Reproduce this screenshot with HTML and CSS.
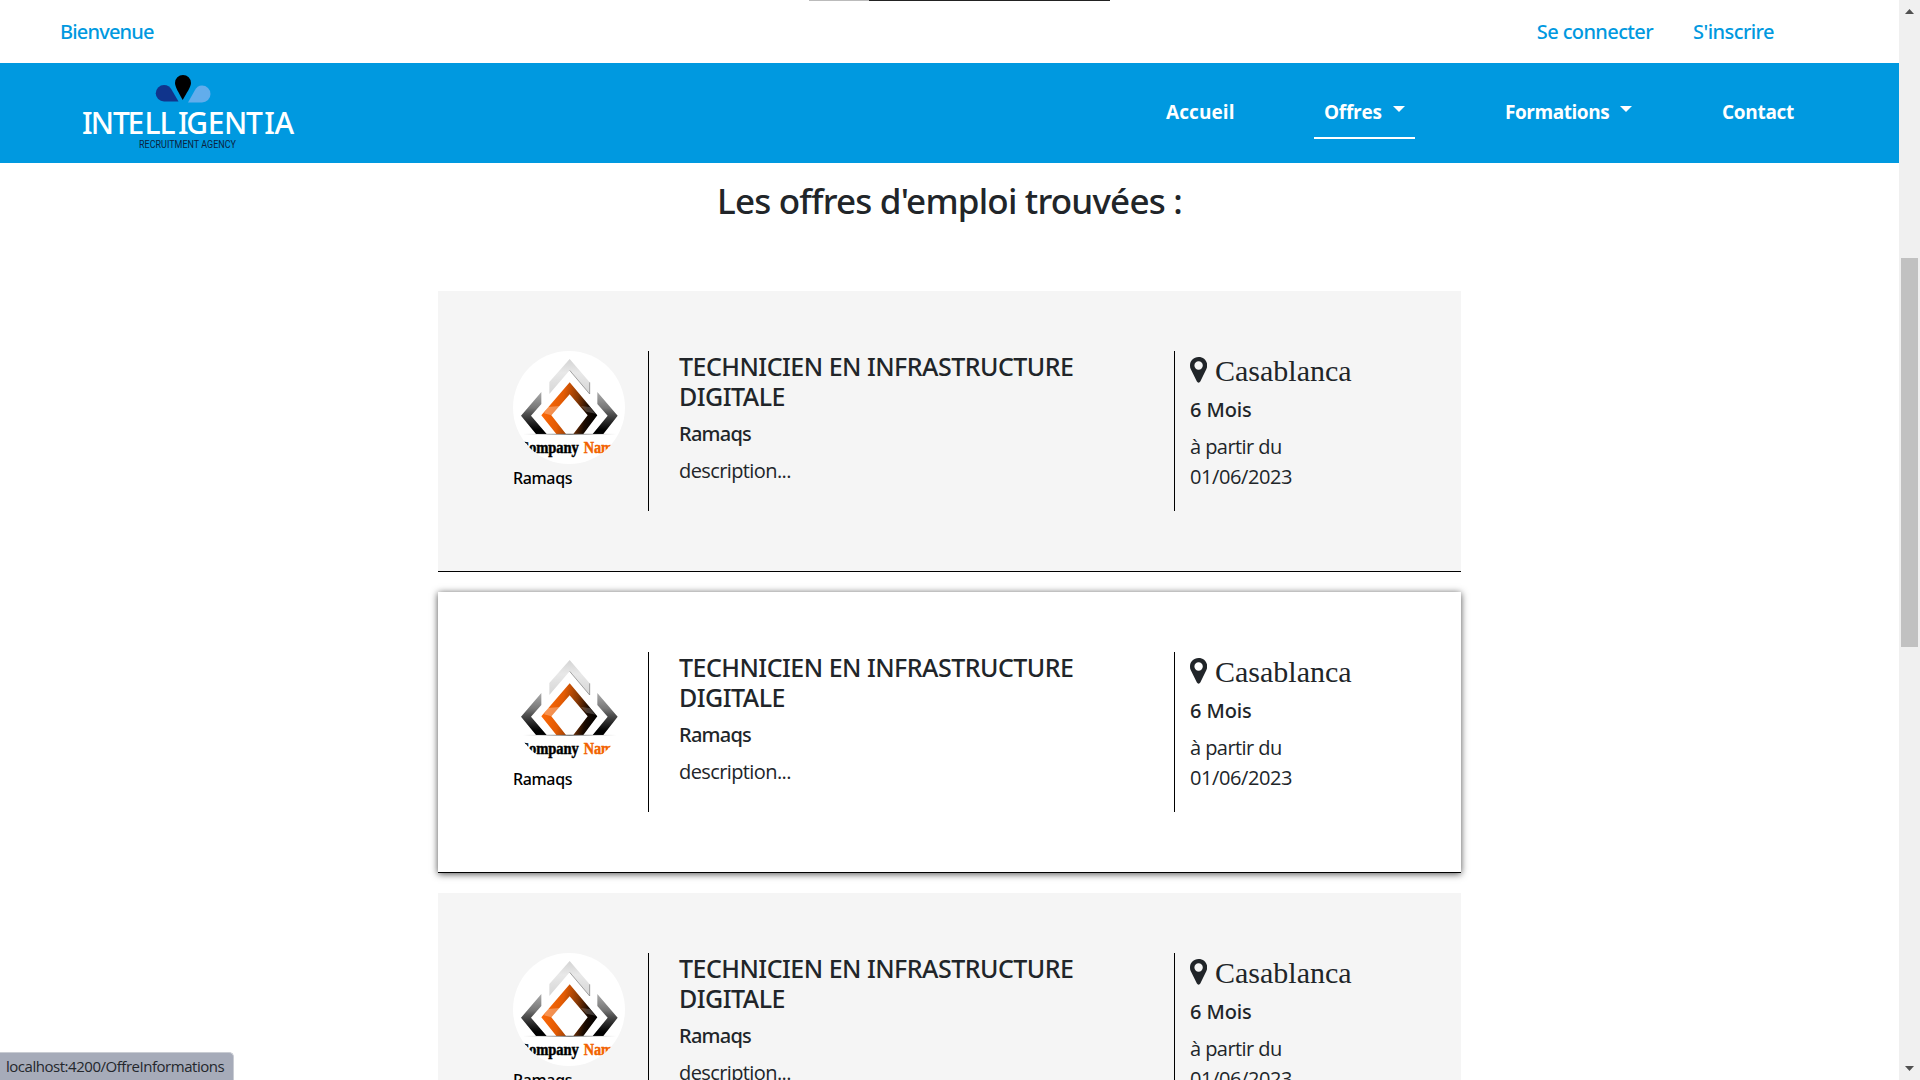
FILE: index.html
```html
<!DOCTYPE html>
<html lang="fr">
<head>
<meta charset="utf-8">
<title>Intelligentia</title>
<link rel="stylesheet" href="styles.css">
</head>
<body>
<svg class="defs" aria-hidden="true">
  <defs>
    <linearGradient id="g-side" x1="0" y1="0" x2="0" y2="1">
      <stop offset="0" stop-color="#aaa"/><stop offset=".38" stop-color="#777"/><stop offset=".5" stop-color="#555"/><stop offset=".9" stop-color="#000"/>
    </linearGradient>
    <linearGradient id="g-mid" x1="0" y1=".4" x2="1" y2=".6">
      <stop offset="0" stop-color="#ff6a08"/><stop offset=".35" stop-color="#e35b04"/><stop offset=".6" stop-color="#8a3a05"/><stop offset=".82" stop-color="#1a0a00"/><stop offset="1" stop-color="#000"/>
    </linearGradient>
    <linearGradient id="g-top" x1="0" y1="0" x2="0" y2="1">
      <stop offset="0" stop-color="#d4d4d4"/><stop offset=".4" stop-color="#e8e8e8"/><stop offset="1" stop-color="#d6d6d6"/>
    </linearGradient>
    <linearGradient id="g-floor"><stop offset="0" stop-color="#999" stop-opacity="0"/><stop offset=".5" stop-color="#555"/><stop offset="1" stop-color="#999" stop-opacity="0"/></linearGradient>
    <clipPath id="round"><ellipse cx="168" cy="169.5" rx="168" ry="169.5"/></clipPath>
    <symbol id="company" viewBox="0 0 336 339">
      <g clip-path="url(#round)">
        <path fill="#fff" d="M0 0h336v339H0z"/>
        <path fill="url(#g-top)" d="M170 24l60 70v35l-60-71-61 71V93z"/>
        <path fill="none" stroke="#777" stroke-width="2" d="M230 94v35l-60-71"/>
        <path fill="url(#g-side)" d="M85 123v36l-31 35 47 55H69L24 194z"/>
        <path fill="url(#g-side)" d="M253 123v36l31 35-45 55h32l43-55z"/>
        <path fill="url(#g-mid)" fill-rule="evenodd" d="M170 94l83 99-42 56h-30l43-56-54-63-55 63 44 56h-29l-45-56z"/>
        <path fill="#fff" opacity=".3" d="M104 168l36-3-25 28-22-6z"/>
        <path fill="#fff" opacity=".2" d="M204 165l26 3 18 20-28-6z"/>
        <path fill="url(#g-floor)" d="M30 248h280v3H30z"/>
        <text class="company-text" x="17" y="307" textLength="180" lengthAdjust="spacingAndGlyphs">Company</text>
        <text class="company-text company-orange" x="212" y="307" textLength="106" lengthAdjust="spacingAndGlyphs">Name</text>
      </g>
    </symbol>
    <symbol id="marker" viewBox="0 0 17 26">
      <path fill-rule="evenodd" d="M8.6 0C3.6 0 0 3.6 0 8.5c0 1.4.2 2.500.7 3.500l6.200 12.600c.7 1.500 2.700 1.500 3.400 0L16.400 12c.5-1 .8-2.100.8-3.500C17.200 3.600 13.500 0 8.600 0zM8.600 4.300a4.200 4.200 0 1 1 0 8.400 4.200 4.200 0 0 1 0-8.400z"/>
    </symbol>
  </defs>
</svg>
<div class="window">
  <div class="page">
    <header class="topbar">
      <span class="welcome">Bienvenue</span>
      <a class="login">Se connecter</a>
      <a class="signup">S'inscrire</a>
    </header>
    <nav class="navbar">
      <svg class="brand" viewBox="0 0 240 80" width="240" height="80">
        <path fill="#000" d="M113 2a8 8 0 0 1 8 8c0 4-4.500 10-8.300 17C109 20 105 14 105 10a8 8 0 0 1 8-8z"/>
        <path fill="#10348c" d="M94 12c3.500 0 6 2 7.500 4.500L108.500 28.500H94a8.200 8.200 0 1 1 0-16.500z"/>
        <path fill="#62adec" d="M132 12.500c-3.500 0-5.500 2-7 4.500L118 29.500h14a8.500 8.500 0 1 0 0-17z"/>
        <text class="brand-name" y="60.700" x="11.900 20.800 43 57.400 74.400 89.400 107.900 116.200 137.800 154.100 176 194.200 204.600">INTELLIGENTIA</text>
        <text class="brand-sub" x="69" y="75" textLength="97" lengthAdjust="spacingAndGlyphs">RECRUITMENT AGENCY</text>
      </svg>
      <div class="menu">
        <a class="item accueil">Accueil</a>
        <a class="item offres active">Offres<i class="caret"></i></a>
        <a class="item formations"><span>Formations</span><i class="caret"></i></a>
        <a class="item contact">Contact</a>
      </div>
    </nav>
    <main>
      <h3 class="heading">Les offres d'emploi trouvées :</h3>
      <article class="card">
        <div class="company"><svg class="logo"><use href="#company"/></svg><span>Ramaqs</span></div>
        <div class="info"><h5>TECHNICIEN EN INFRASTRUCTURE DIGITALE</h5><h6>Ramaqs</h6><p>description...</p></div>
        <div class="place"><div class="city"><svg class="pin"><use href="#marker"/></svg>Casablanca</div><h6>6 Mois</h6><p>à partir du<br><span class="date">01/06/2023</span></p></div>
      </article>
      <article class="card hovered">
        <div class="company"><svg class="logo"><use href="#company"/></svg><span>Ramaqs</span></div>
        <div class="info"><h5>TECHNICIEN EN INFRASTRUCTURE DIGITALE</h5><h6>Ramaqs</h6><p>description...</p></div>
        <div class="place"><div class="city"><svg class="pin"><use href="#marker"/></svg>Casablanca</div><h6>6 Mois</h6><p>à partir du<br><span class="date">01/06/2023</span></p></div>
      </article>
      <article class="card">
        <div class="company"><svg class="logo"><use href="#company"/></svg><span>Ramaqs</span></div>
        <div class="info"><h5>TECHNICIEN EN INFRASTRUCTURE DIGITALE</h5><h6>Ramaqs</h6><p>description...</p></div>
        <div class="place"><div class="city"><svg class="pin"><use href="#marker"/></svg>Casablanca</div><h6>6 Mois</h6><p>à partir du<br><span class="date">01/06/2023</span></p></div>
      </article>
    </main>
  </div>
  <div class="scrollbar">
    <svg width="9" height="5" viewBox="0 0 9 5"><path fill="#505050" d="M4.500 0L9 5H0z"/></svg>
    <div class="thumb"></div>
    <svg width="9" height="5" viewBox="0 0 9 5"><path fill="#505050" d="M0 0h9L4.500 5z"/></svg>
  </div>
</div>
<div class="edge"></div>
<div class="status">localhost:4200/OffreInformations</div>
</body>
</html>
```
FILE: styles.css
```css
* { box-sizing: border-box; }
body {
  margin: 0;
  overflow: hidden;
  background: #fff;
  color: #212529;
  font: 400 20px/30px "Open Sans", "Noto Sans", sans-serif;
}
h3, h5, h6, p { margin: 0; }
h3, h5, h6 { font-family: "Noto Sans", sans-serif; font-weight: 500; }
.defs { display: block; width: 0; height: 0; }
.window { display: flex; height: 1080px; }
.page { width: 1899px; height: 1080px; overflow: hidden; }

.topbar {
  display: flex;
  align-items: center;
  height: 63px;
  padding: 1px 125px 0 60px;
  color: #0099e0;
  font-family: "Noto Sans", sans-serif;
  font-weight: 500;
}
.welcome { margin-right: auto; letter-spacing: -.82px; }
.login { letter-spacing: -.62px; margin-right: 40px; }
.signup { letter-spacing: -.57px; }

.navbar {
  display: flex;
  justify-content: space-between;
  height: 100px;
  padding: 10px 95px 0 70px;
  background: #0099e0;
}
.menu { display: flex; height: 66px; }
.item {
  display: flex;
  align-items: center;
  padding: 23px 10px 10px;
  border-bottom: 2px solid transparent;
  color: #fff;
  font-size: 19px;
  font-weight: 700;
}
.accueil { width: 88px; margin-right: 70px; letter-spacing: .1px; }
.offres { width: 101px; margin-right: 80px; letter-spacing: -.25px; }
.formations { width: 147px; margin-right: 70px; letter-spacing: -.45px; }
.contact { width: 92px; letter-spacing: -.3px; }
.active { border-bottom-color: #fff; }
.caret {
  margin: 0 0 5px auto;
  border: 6px solid transparent;
  border-top-color: #fff;
  border-bottom: 0;
}
.brand-name { fill: #fff; font: 500 30px "Noto Sans", sans-serif; }
.brand-sub { fill: #0b2340; font: 400 10px Roboto, sans-serif; }

.heading {
  height: 128px;
  padding-top: 17px;
  font-size: 35px;
  line-height: 42px;
  letter-spacing: -.8px;
  text-align: center;
}
.card {
  display: flex;
  width: 1023px;
  height: 281px;
  margin: 0 auto 20px;
  padding: 60px 75px;
  border-bottom: 1px solid #000;
  background: #f5f5f5;
}
.hovered { background: #fff; box-shadow: 0 1px 7px rgba(0, 0, 0, .7); }
.company {
  width: 135px;
  color: #000;
  font: 500 16px/24px "Noto Sans", sans-serif;
  letter-spacing: -.35px;
}
.logo { display: block; width: 112px; height: 113px; margin-bottom: 2px; }
.info {
  width: 526px;
  height: 160px;
  padding-left: 30px;
  padding-right: 60px;
  border-left: 1px solid #000;
}
h5 { margin-bottom: 11px; font-size: 25px; line-height: 30px; letter-spacing: -.52px; }
h6 { margin-bottom: 10px; font-size: 20px; line-height: 24px; letter-spacing: -.75px; }
.info p { letter-spacing: -.6px; }
.place {
  width: 212px;
  height: 160px;
  padding-left: 15px;
  border-left: 1px solid #000;
}
.place h6 { letter-spacing: -.1px; }
.place p { letter-spacing: -.56px; }
.date { letter-spacing: -.4px; }
.city {
  display: flex;
  align-items: center;
  gap: 8px;
  height: 36px;
  margin-bottom: 11px;
  padding-top: 4px;
  font: 30px/36px "Liberation Serif", serif;
}
.pin { width: 17px; height: 26px; margin-bottom: 2px; fill: #212529; }
.company-text { font: 700 52px "Liberation Serif", serif; fill: #000; stroke: #000; stroke-width: 1.500px; }
.company-orange { fill: #f26200; stroke: #f26200; }

.scrollbar {
  display: flex;
  flex-direction: column;
  align-items: center;
  width: 21px;
  height: 1080px;
  padding: 9px 1px 9px 0;
  background: #f0f0f0;
}
.thumb { width: 17px; height: 389px; margin: 244px 0 auto; background: #c1c1c1; }

.edge {
  position: absolute;
  top: 0;
  left: 809px;
  width: 301px;
  height: 1px;
  background: linear-gradient(90deg, #bbb 60px, #222 60px);
}
.status {
  position: absolute;
  left: 0;
  bottom: 0;
  width: 234px;
  height: 28px;
  padding-left: 6px;
  border: 1px solid #c9ccd3;
  border-width: 1px 1px 0 0;
  border-radius: 0 5px 0 0;
  background: #a6abb9;
  color: #24272c;
  font-size: 15px;
  line-height: 27px;
  letter-spacing: -.47px;
}
```
